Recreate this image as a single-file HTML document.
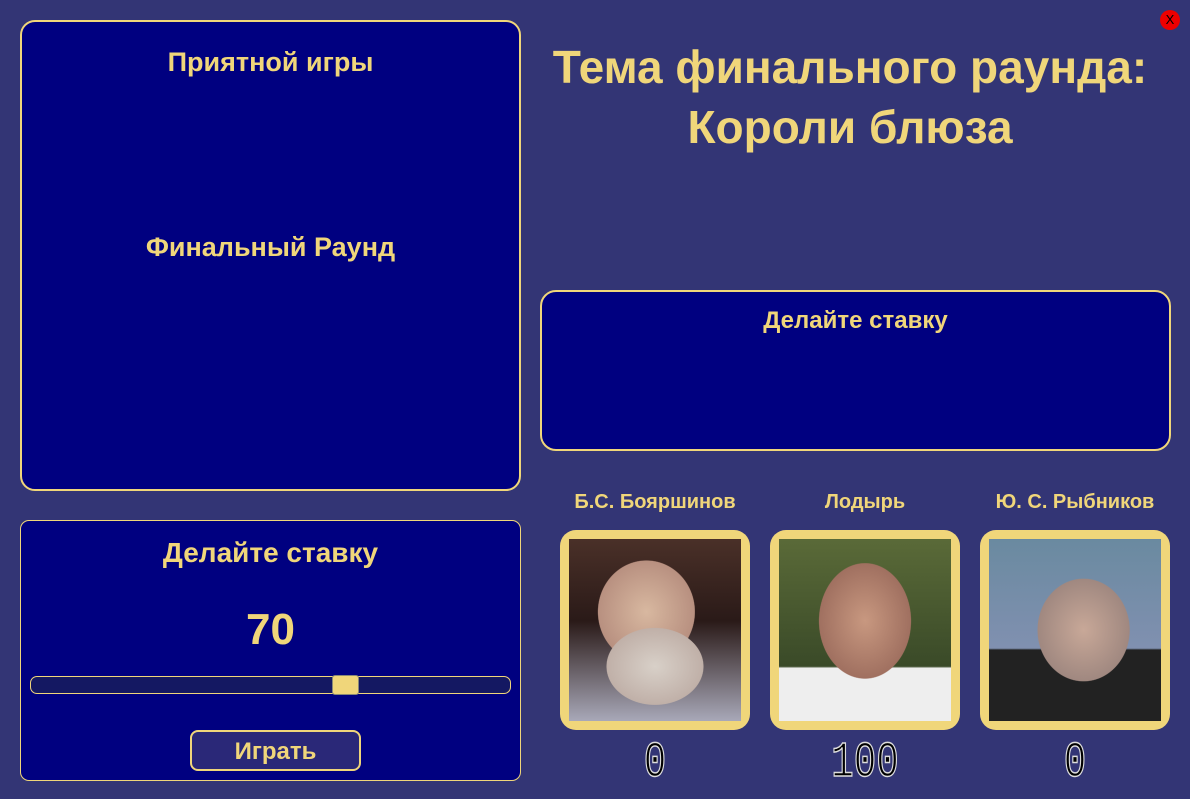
<!DOCTYPE html>
<html><head><meta charset="utf-8"><style>
*{margin:0;padding:0;box-sizing:border-box}
body{width:1190px;height:799px;background:#333575;font-family:"Liberation Sans",sans-serif;color:#f0d67a;font-weight:bold;position:relative;overflow:hidden}
.p{position:absolute;background:#000080;border:2px solid #f0d67a}
.t{position:absolute;text-align:center;white-space:nowrap}
.fr{position:absolute;width:190px;height:200px;background:#f0d67a;border-radius:16px}
.ph{position:absolute;left:9px;top:9px;width:172px;height:182px}
.dg{position:absolute;top:738px;height:52px;text-align:center;font-family:"Liberation Mono",monospace;font-size:50px;line-height:52px;color:#000;-webkit-text-stroke:1.5px #ddd;font-weight:normal;transform:scaleX(0.75)}
</style></head><body>
<div class="p" style="left:20px;top:20px;width:501px;height:471px;border-radius:15px"></div>
<div class="t" style="left:20px;width:501px;top:47px;font-size:27px">Приятной игры</div>
<div class="t" style="left:20px;width:501px;top:232px;font-size:27px">Финальный Раунд</div>
<div class="p" style="left:20px;top:520px;width:501px;height:261px;border-radius:9px;border-width:1px"></div>
<div class="t" style="left:20px;width:501px;top:537px;font-size:28px">Делайте ставку</div>
<div class="t" style="left:20px;width:501px;top:605px;font-size:44px">70</div>
<div style="position:absolute;left:30px;top:676px;width:481px;height:18px;background:#141862;border:1px solid #f0d67a;border-radius:7px"></div>
<div style="position:absolute;left:332px;top:675px;width:27px;height:20px;background:#f0d67a;border:1px solid #887;border-radius:3px"></div>
<div style="position:absolute;left:190px;top:730px;width:171px;height:41px;background:#2a2878;border:2px solid #f0d67a;border-radius:8px"></div>
<div class="t" style="left:190px;width:171px;top:738px;font-size:24px">Играть</div>
<div class="t" style="left:530px;width:640px;top:37px;font-size:46px;line-height:60px">Тема финального раунда:<br>Короли блюза</div>
<div class="p" style="left:540px;top:290px;width:631px;height:161px;border-radius:16px"></div>
<div class="t" style="left:540px;width:631px;top:307px;font-size:24px">Делайте ставку</div>
<div style="position:absolute;left:1160px;top:10px;width:20px;height:20px;border-radius:50%;background:#e00;color:#000;font-size:13px;font-weight:normal;text-align:center;line-height:20px">X</div>
<div class="t" style="left:555px;width:200px;top:491px;font-size:20px">Б.С. Бояршинов</div>
<div class="t" style="left:765px;width:200px;top:491px;font-size:20px">Лодырь</div>
<div class="t" style="left:975px;width:200px;top:491px;font-size:20px">Ю. С. Рыбников</div>
<div class="fr" style="left:560px;top:530px"><div class="ph" style="background:radial-gradient(ellipse 40% 30% at 50% 70%,#d8d0c8,#c0b0a8 70%,transparent 71%),radial-gradient(ellipse 40% 40% at 45% 40%,#d8b8a0,#b89080 70%,transparent 71%),linear-gradient(#4a3028,#2a1a18 45%,#a8a8b8)"></div></div>
<div class="fr" style="left:770px;top:530px"><div class="ph" style="background:radial-gradient(ellipse 38% 45% at 50% 45%,#c89880,#a07060 70%,transparent 71%),linear-gradient(#5a6a38,#3a4a28 70%,#eee 71%)"></div></div>
<div class="fr" style="left:980px;top:530px"><div class="ph" style="background:radial-gradient(ellipse 38% 40% at 55% 50%,#c8a898,#a08880 70%,transparent 71%),linear-gradient(#6a8aa0,#8090b0 60%,#222 61%)"></div></div>
<div class="dg" style="left:625px;width:60px">0</div>
<div class="dg" style="left:820px;width:90px">100</div>
<div class="dg" style="left:1045px;width:60px">0</div>
</body></html>
